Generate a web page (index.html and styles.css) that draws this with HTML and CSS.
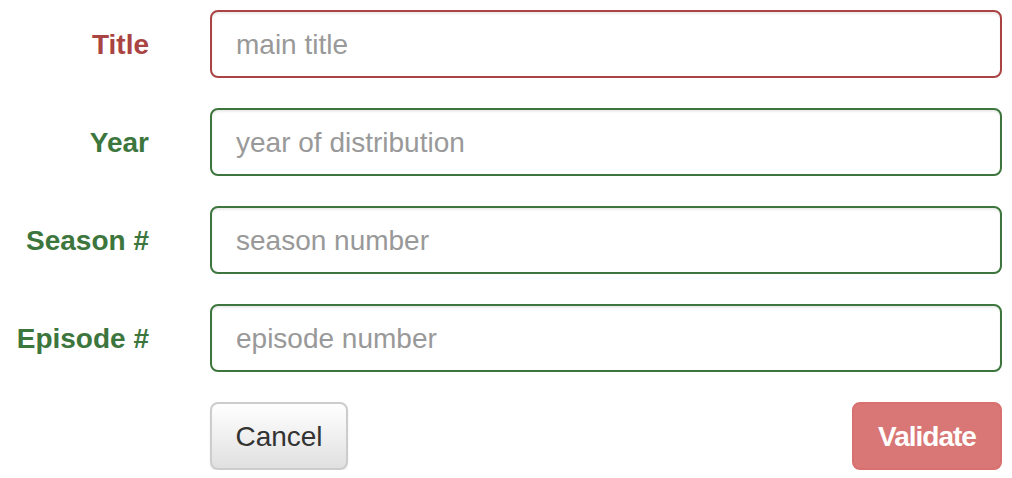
FILE: index.html
```html
<!DOCTYPE html>
<html>
<head>
<meta charset="utf-8">
<link rel="stylesheet" href="styles.css">
</head>
<body>
<form class="form">
  <div class="row has-error">
    <label class="label" for="t">Title</label>
    <input class="input" id="t" type="text" placeholder="main title">
  </div>
  <div class="row has-success">
    <label class="label" for="y">Year</label>
    <input class="input" id="y" type="text" placeholder="year of distribution">
  </div>
  <div class="row has-success">
    <label class="label" for="s">Season #</label>
    <input class="input" id="s" type="text" placeholder="season number">
  </div>
  <div class="row has-success">
    <label class="label" for="e">Episode #</label>
    <input class="input" id="e" type="text" placeholder="episode number">
  </div>
  <div class="row">
    <span class="label"></span>
    <div class="actions">
      <button type="button" class="btn btn-default">Cancel</button>
      <button type="button" class="btn btn-danger">Validate</button>
    </div>
  </div>
</form>
</body>
</html>
```

FILE: styles.css
```css
html, body {
  margin: 0;
  padding: 0;
  background: #fff;
}
body {
  font-family: "Liberation Sans", Arial, Helvetica, sans-serif;
  font-size: 28px;
  color: #333;
}
.form {
  display: flex;
  flex-direction: column;
  gap: 30px;
  padding: 10px 10px 0 0;
}
.row {
  display: grid;
  grid-template-columns: 149px 1fr;
  column-gap: 61px;
  align-items: center;
}
.label {
  font-weight: bold;
  text-align: right;
  font-size: 28px;
  line-height: 40px;
  padding-top: 2px;
}
.input {
  box-sizing: border-box;
  height: 68px;
  width: 100%;
  padding: 2px 24px 0;
  font-family: "Liberation Sans", Arial, Helvetica, sans-serif;
  font-size: 28px;
  color: #555;
  background: #fff;
  border: 2px solid #ccc;
  border-radius: 8px;
  box-shadow: inset 0 2px 2px rgba(0,0,0,.075);
  outline: none;
}
.input::placeholder {
  color: #999;
}
.has-error .label { color: #a94442; }
.has-error .input { border-color: #a94442; }
.has-success .label { color: #3c763d; }
.has-success .input { border-color: #3c763d; }
.actions {
  display: flex;
  justify-content: space-between;
}
.btn {
  box-sizing: border-box;
  height: 68px;
  padding: 2px 0 0;
  font-family: "Liberation Sans", Arial, Helvetica, sans-serif;
  font-size: 28px;
  border-radius: 8px;
  border: 2px solid transparent;
  cursor: pointer;
}
.btn-default {
  width: 138px;
  color: #333;
  background: linear-gradient(#fff, #e0e0e0);
  border-color: #ccc;
  box-shadow: inset 0 2px 0 rgba(255,255,255,.15), 0 2px 2px rgba(0,0,0,.075);
}
.btn-danger {
  width: 150px;
  color: #fff;
  font-weight: bold;
  letter-spacing: -1px;
  background: #d87775;
  border-color: #d7706e;
}
```
